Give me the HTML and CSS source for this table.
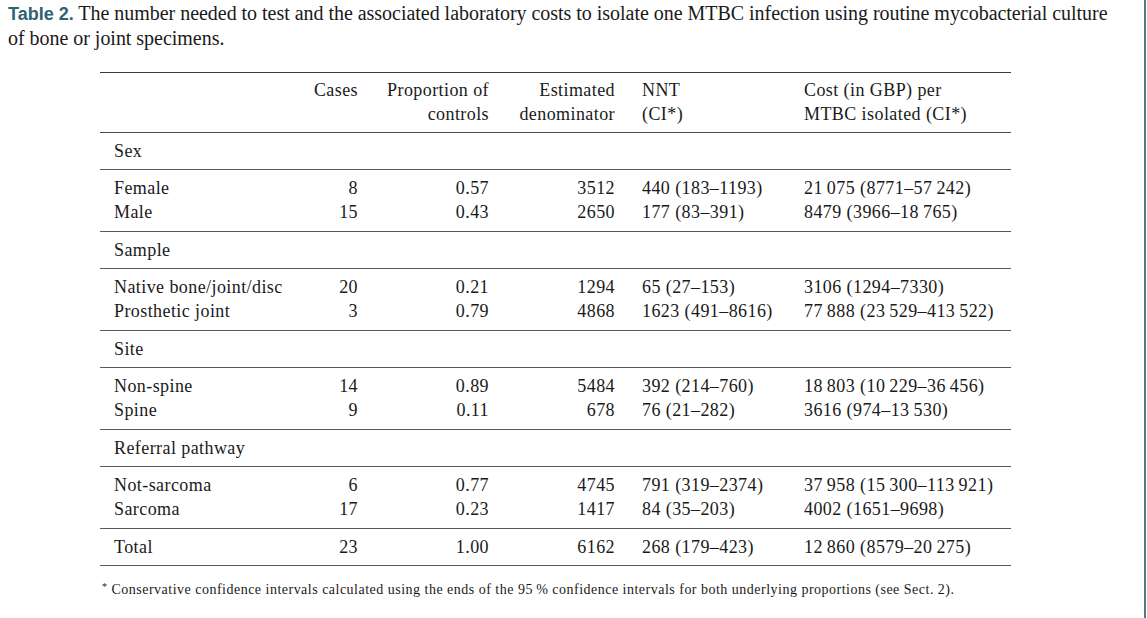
FILE: index.html
```html
<!DOCTYPE html>
<html>
<head>
<meta charset="utf-8">
<link rel="stylesheet" href="styles.css">
</head>
<body>
<div class="page">
  <p class="caption"><span class="label">Table 2.</span> The number needed to test and the associated laboratory costs to isolate one MTBC infection using routine mycobacterial culture of bone or joint specimens.</p>
  <table class="data">
    <colgroup>
      <col class="c-label"><col class="c-cases"><col class="c-prop"><col class="c-est"><col class="c-nnt"><col class="c-cost">
    </colgroup>
    <thead>
      <tr>
        <th class="lab"></th>
        <th class="num">Cases</th>
        <th class="num">Proportion of<br>controls</th>
        <th class="num">Estimated<br>denominator</th>
        <th class="nnt">NNT<br>(CI*)</th>
        <th class="cost">Cost (in GBP) per<br>MTBC isolated (CI*)</th>
      </tr>
    </thead>
    <tbody class="section"><tr><td class="lab" colspan="6">Sex</td></tr></tbody>
    <tbody class="group">
      <tr><td class="lab">Female</td><td class="num">8</td><td class="num">0.57</td><td class="num">3512</td><td class="nnt">440 (183–1193)</td><td class="cost">21&#8201;075 (8771–57&#8201;242)</td></tr>
      <tr><td class="lab">Male</td><td class="num">15</td><td class="num">0.43</td><td class="num">2650</td><td class="nnt">177 (83–391)</td><td class="cost">8479 (3966–18&#8201;765)</td></tr>
    </tbody>
    <tbody class="section"><tr><td class="lab" colspan="6">Sample</td></tr></tbody>
    <tbody class="group">
      <tr><td class="lab">Native bone/joint/disc</td><td class="num">20</td><td class="num">0.21</td><td class="num">1294</td><td class="nnt">65 (27–153)</td><td class="cost">3106 (1294–7330)</td></tr>
      <tr><td class="lab">Prosthetic joint</td><td class="num">3</td><td class="num">0.79</td><td class="num">4868</td><td class="nnt">1623 (491–8616)</td><td class="cost">77&#8201;888 (23&#8201;529–413&#8201;522)</td></tr>
    </tbody>
    <tbody class="section"><tr><td class="lab" colspan="6">Site</td></tr></tbody>
    <tbody class="group">
      <tr><td class="lab">Non-spine</td><td class="num">14</td><td class="num">0.89</td><td class="num">5484</td><td class="nnt">392 (214–760)</td><td class="cost">18&#8201;803 (10&#8201;229–36&#8201;456)</td></tr>
      <tr><td class="lab">Spine</td><td class="num">9</td><td class="num">0.11</td><td class="num">678</td><td class="nnt">76 (21–282)</td><td class="cost">3616 (974–13&#8201;530)</td></tr>
    </tbody>
    <tbody class="section"><tr><td class="lab" colspan="6">Referral pathway</td></tr></tbody>
    <tbody class="group">
      <tr><td class="lab">Not-sarcoma</td><td class="num">6</td><td class="num">0.77</td><td class="num">4745</td><td class="nnt">791 (319–2374)</td><td class="cost">37&#8201;958 (15&#8201;300–113&#8201;921)</td></tr>
      <tr><td class="lab">Sarcoma</td><td class="num">17</td><td class="num">0.23</td><td class="num">1417</td><td class="nnt">84 (35–203)</td><td class="cost">4002 (1651–9698)</td></tr>
    </tbody>
    <tbody class="section total"><tr><td class="lab">Total</td><td class="num">23</td><td class="num">1.00</td><td class="num">6162</td><td class="nnt">268 (179–423)</td><td class="cost">12&#8201;860 (8579–20&#8201;275)</td></tr></tbody>
  </table>
  <p class="footnote"><sup>*</sup> Conservative confidence intervals calculated using the ends of the 95&#8201;% confidence intervals for both underlying proportions (see Sect. 2).</p>
</div>
</body>
</html>
```

FILE: styles.css
```css
html, body {
  margin: 0;
  padding: 0;
  background: #ffffff;
}

.page {
  box-sizing: border-box;
  width: 1146px;
  height: 618px;
  padding: 1px 0 0 8px;
  border-right: 2px solid #4f7c83;
  font-family: "Liberation Serif", "Times New Roman", serif;
  color: #1a1a1a;
}

.caption {
  margin: 0;
  font-size: 20px;
  line-height: 24px;
  letter-spacing: -0.03px;
  width: 1108px;
}

.caption .label {
  font-family: "Liberation Sans", Arial, sans-serif;
  font-weight: bold;
  color: #2e6471;
  font-size: 18px;
  letter-spacing: 0;
}

.data {
  margin: 22px 0 0 92px;
  width: 911px;
  table-layout: fixed;
  border-collapse: collapse;
  font-size: 18px;
  line-height: 24px;
  letter-spacing: 0.42px;
  border-top: 1px solid #3a3a3a;
  border-bottom: 1px solid #5a5a5a;
}

.c-label { width: 200px; }
.c-cases { width: 58px; }
.c-prop { width: 131px; }
.c-est { width: 126px; }
.c-nnt { width: 189px; }
.c-cost { width: 207px; }

.data th,
.data td {
  padding: 0;
  font-weight: normal;
  white-space: nowrap;
  vertical-align: top;
}

.data thead th {
  padding-top: 5px;
  padding-bottom: 6px;
  border-bottom: 1px solid #4a4a4a;
}

.data .lab { text-align: left; padding-left: 14px; }
.data .num { text-align: right; }
.data .nnt { text-align: left; padding-left: 27px; }
.data .cost { text-align: left; }

.data tbody.section td {
  padding-top: 6px;
  padding-bottom: 6px;
  border-bottom: 1px solid #5a5a5a;
}

.data tbody.group tr:first-child td { padding-top: 6px; }
.data tbody.group tr:last-child td {
  padding-bottom: 7px;
  border-bottom: 1px solid #5a5a5a;
}

.footnote {
  margin: 15px 0 0 94px;
  font-size: 14px;
  line-height: 18px;
  letter-spacing: 0.49px;
}

.footnote sup {
  font-size: 10px;
  vertical-align: 4px;
  line-height: 0;
}
```
